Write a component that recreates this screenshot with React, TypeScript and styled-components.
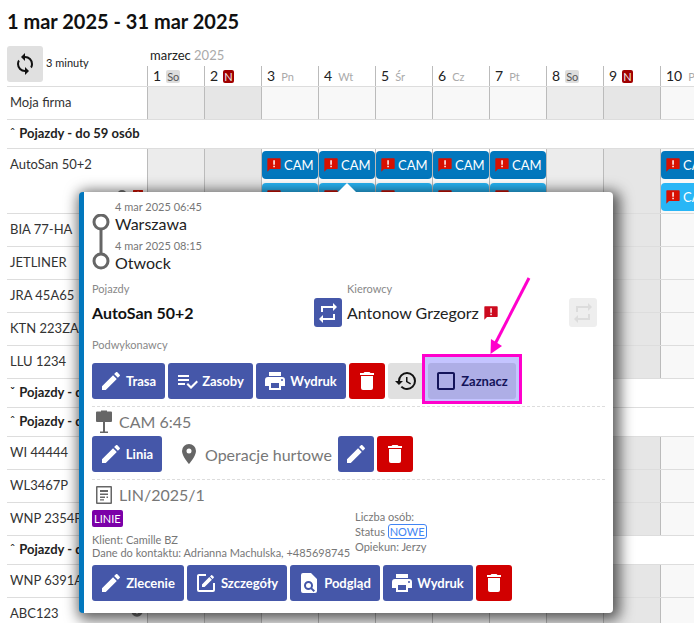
import React from "react";
import styled, { createGlobalStyle } from "styled-components";

const P = {
  pencil: "M20.71,7.04C21.1,6.65 21.1,6 20.71,5.63L18.37,3.29C18,2.9 17.35,2.9 16.96,3.29L15.12,5.12L18.87,8.87M3,17.25V21H6.75L17.81,9.93L14.06,6.18L3,17.25Z",
  trash: "M19,4H15.5L14.5,3H9.5L8.5,4H5V6H19M6,19A2,2 0 0,0 8,21H16A2,2 0 0,0 18,19V7H6V19Z",
  printer: "M18,3H6V7H18M19,12A1,1 0 0,1 18,11A1,1 0 0,1 19,10A1,1 0 0,1 20,11A1,1 0 0,1 19,12M16,19H8V14H16M19,8H5A3,3 0 0,0 2,11V17H6V21H18V17H22V11A3,3 0 0,0 19,8Z",
  sync: "M12,18A6,6 0 0,1 6,12C6,11 6.25,10.03 6.7,9.2L5.24,7.74C4.46,8.97 4,10.43 4,12A8,8 0 0,0 12,20V23L16,19L12,15M12,4V1L8,5L12,9V6A6,6 0 0,1 18,12C18,13 17.75,13.97 17.3,14.8L18.76,16.26C19.54,15.03 20,13.57 20,12A8,8 0 0,0 12,4Z",
  repeat: "M17,17H7V14L3,18L7,22V19H19V13H17M7,7H17V10L21,6L17,2V5H5V11H7V7Z",
  marker: "M12,11.5A2.5,2.5 0 0,1 9.5,9A2.5,2.5 0 0,1 12,6.5A2.5,2.5 0 0,1 14.5,9A2.5,2.5 0 0,1 12,11.5M12,2A7,7 0 0,0 5,9C5,14.25 12,22 12,22C12,22 19,14.25 19,9A7,7 0 0,0 12,2Z",
  history: "M13.5,8H12V13L16.28,15.54L17,14.33L13.5,12.25V8M13,3A9,9 0 0,0 4,12H1L4.96,16.03L9,12H6A7,7 0 0,1 13,5A7,7 0 0,1 20,12A7,7 0 0,1 13,19C11.07,19 9.32,18.21 8.06,16.94L6.64,18.36C8.27,20 10.5,21 13,21A9,9 0 0,0 22,12A9,9 0 0,0 13,3",
  box: "M19,3H5C3.89,3 3,3.89 3,5V19A2,2 0 0,0 5,21H19A2,2 0 0,0 21,19V5C21,3.89 20.1,3 19,3M19,5V19H5V5H19Z",
  list: "M14,10H3V12H14V10M14,6H3V8H14V6M3,16H10V14H3V16M21.5,11.5L23,13L16,20L11.5,15.5L13,14L16,17L21.5,11.5Z",
  bubble: "M3,2H21A1,1 0 0,1 22,3V17A1,1 0 0,1 21,18H6L2,22V3A1,1 0 0,1 3,2Z",
  bang: "M11,5H13.2V11.5H11V5M11,13H13.2V15.4H11V13Z",
  editBox: "M5,3C3.89,3 3,3.89 3,5V19A2,2 0 0,0 5,21H19A2,2 0 0,0 21,19V12H19V19H5V5H12V3H5M17.78,4C17.58,4 17.38,4.07 17.23,4.22L16,5.44L18.56,8L19.78,6.78C20.04,6.52 20.04,6.1 19.78,5.84L18.16,4.22C18.03,4.09 17.86,4 17.78,4M15.32,6.12L8,13.44V16H10.56L17.89,8.66L15.32,6.12Z",
  preview: "M6,2H14L20,8V20A2,2 0 0,1 18,22H6A2,2 0 0,1 4,20V4A2,2 0 0,1 6,2M11.5,10A4.5,4.5 0 0,0 7,14.5A4.5,4.5 0 0,0 11.5,19C12.4,19 13.2,18.74 13.9,18.3L16.6,21L18,19.6L15.3,16.9C15.74,16.2 16,15.4 16,14.5A4.5,4.5 0 0,0 11.5,10M11.5,12A2.5,2.5 0 0,1 14,14.5A2.5,2.5 0 0,1 11.5,17A2.5,2.5 0 0,1 9,14.5A2.5,2.5 0 0,1 11.5,12Z",
  sign: "M9,0.5H15V1.5H19A1,1 0 0,1 20,2.5V11A1,1 0 0,1 19,12H13V21.5H16V23H8V21.5H11V12H5A1,1 0 0,1 4,11V2.5A1,1 0 0,1 5,1.5H9V0.5Z",
  doc: "M5,3H19A1,1 0 0,1 20,4V20A1,1 0 0,1 19,21H5A1,1 0 0,1 4,20V4A1,1 0 0,1 5,3M5.5,4.5V19.5H18.5V4.5H5.5M8,7H16V9H8V7M8,10.5H16V12H8V10.5M8,13.5H13V15H8V13.5M14.5,13.5H16V15H14.5V13.5M8,16.2H12V17.6H8V16.2Z",
  info: "M12,2A10,10 0 1,0 22,12A10,10 0 0,0 12,2M13,17H11V11H13V17M13,9H11V7H13V9Z",
};

const GlobalStyle = createGlobalStyle`
  html, body { margin: 0; padding: 0; background: #fff; }
  body { font-family: "Lato", "Liberation Sans", sans-serif; color: #222; }
`;

const Page = styled.div`
  position: relative;
  width: 694px;
  height: 623px;
  overflow: hidden;
  padding-left: 7px;
  box-sizing: border-box;
`;
const Title = styled.h1`
  margin: 0;
  height: 46px;
  padding-top: 9px;
  box-sizing: border-box;
  font-size: 20px;
  line-height: 24px;
  font-weight: 700;
  color: #111;
  white-space: nowrap;
`;
const Svg = styled.svg<{ $size: number; $color: string }>`
  width: ${(p) => p.$size}px;
  height: ${(p) => p.$size}px;
  flex: none;
  display: block;
  fill: ${(p) => p.$color};
`;
const Icon = ({ d, size = 24, color = "#fff" }: { d: string; size?: number; color?: string }) => (
  <Svg viewBox="0 0 24 24" $size={size} $color={color}><path d={d} /></Svg>
);
const AlertIcon = ({ size = 16, color = "#d81000" }: { size?: number; color?: string }) => (
  <Svg viewBox="0 0 24 24" $size={size} $color={color}>
    <path d={P.bubble} />
    <path d={P.bang} fill="#fff" />
  </Svg>
);

const Grid = styled.div`
  display: grid;
  grid-template-columns: 140px repeat(10, 57px);
  width: 710px;
`;
const HeaderGrid = styled(Grid)`
  height: 40px;
  border-bottom: 1px solid #ddd;
`;
const HeaderLeft = styled.div`
  display: flex;
  align-items: flex-start;
  gap: 3px;
`;
const RefreshButton = styled.button`
  width: 36px;
  height: 36px;
  padding: 0;
  border: 0;
  border-radius: 3px;
  background: #e0e0e0;
  display: flex;
  align-items: center;
  justify-content: center;
`;
const RefreshLabel = styled.span`
  font-size: 11px;
  line-height: 16px;
  margin-top: 9px;
  color: #222;
`;
const HeaderRight = styled.div`
  grid-column: 2 / -1;
  display: flex;
  flex-direction: column;
`;
const Month = styled.div`
  height: 20px;
  padding: 0 0 0 3px;
  box-sizing: border-box;
  font-size: 13px;
  line-height: 18px;
  color: #222;
  span { color: #aaa; }
`;
const Days = styled.div`
  display: grid;
  grid-template-columns: repeat(10, 57px);
  height: 20px;
`;
const DayHead = styled.div`
  border-left: 1px solid #bbb;
  display: flex;
  align-items: center;
  padding-left: 5px;
  gap: 5px;
  font-size: 14px;
  line-height: 20px;
  color: #222;
`;
const DayName = styled.span<{ $kind: string }>`
  font-size: 11px;
  line-height: 13px;
  padding: 0 1px;
  border-radius: 2px;
  color: ${(p) => (p.$kind === "N" ? "#eee" : p.$kind === "So" ? "#555" : "#aaa")};
  background: ${(p) => (p.$kind === "N" ? "#a00000" : p.$kind === "So" ? "#ddd" : "transparent")};
`;
const Row = styled(Grid)<{ $h: number }>`
  height: ${(p) => p.$h}px;
  box-sizing: border-box;
  border-bottom: 1px solid #ddd;
`;
const RowName = styled.div`
  position: relative;
  padding: 7px 0 0 3px;
  font-size: 13px;
  line-height: 17px;
  color: #333;
  white-space: nowrap;
`;
const RowIcons = styled.div`
  position: absolute;
  right: 3px;
  bottom: 12px;
  display: flex;
  gap: 4px;
`;
const GroupName = styled.div`
  grid-column: 1 / -1;
  padding: 5px 0 0 3px;
  font-size: 13px;
  line-height: 16px;
  font-weight: 700;
  color: #222;
  white-space: nowrap;
`;
const Caret = styled.span`
  font-weight: 400;
  margin-right: 4px;
`;
const DayCell = styled.div<{ $bg: string }>`
  border-left: 1px solid #bbb;
  background: ${(p) => p.$bg};
  padding: 2px 0 0 0;
  display: flex;
  flex-direction: column;
  gap: 4px;
`;
const Chip = styled.div<{ $light?: boolean }>`
  width: 56px;
  height: 28px;
  box-sizing: border-box;
  border-radius: 4px;
  background: ${(p) => (p.$light ? "#29b6f6" : "#0277bd")};
  color: #fff;
  display: flex;
  align-items: center;
  gap: 2px;
  padding-left: 4px;
  font-size: 13px;
`;

const Popover = styled.div`
  position: absolute;
  left: 79px;
  top: 192px;
  width: 534px;
  height: 421px;
  box-sizing: border-box;
  background: #fff;
  border-left: 5px solid #0277bd;
  border-radius: 4px;
  box-shadow: 3px 3px 14px 4px rgba(0, 0, 0, 0.62);
  padding: 8px 8px 0 8px;
  display: flex;
  flex-direction: column;
`;
const PopArrow = styled.div`
  position: absolute;
  left: 254px;
  top: -9px;
  width: 0;
  height: 0;
  border-left: 9px solid transparent;
  border-right: 9px solid transparent;
  border-bottom: 9px solid #fff;
`;
const Route = styled.div`
  display: flex;
  gap: 5px;
  height: 82px;
`;
const Stops = styled.div`
  display: flex;
  flex-direction: column;
  gap: 6px;
`;
const Stop = styled.div`
  display: flex;
  flex-direction: column;
`;
const StopTime = styled.div`
  font-size: 11px;
  line-height: 14px;
  color: #777;
`;
const StopPlace = styled.div`
  font-size: 16px;
  line-height: 19px;
  color: #222;
`;
const TimelineSvg = styled.svg`
  width: 18px;
  height: 62px;
  margin-top: 14px;
  flex: none;
`;
const AssignGrid = styled.div`
  display: grid;
  grid-template-columns: 255px 250px;
`;
const Label = styled.div`
  font-size: 11px;
  line-height: 14px;
  color: #888;
  margin-bottom: 2px;
`;
const AssignRow = styled.div`
  display: flex;
  align-items: center;
  height: 29px;
  width: 250px;
  justify-content: space-between;
  font-size: 16px;
`;
const BoldValue = styled.span`
  font-weight: 700;
  color: #111;
`;
const Driver = styled.span`
  display: flex;
  align-items: center;
  gap: 4px;
  color: #222;
`;
const SquareButton = styled.div<{ $muted?: boolean }>`
  width: 28px;
  height: 29px;
  border-radius: 3px;
  background: ${(p) => (p.$muted ? "#eee" : "#4557a9")};
  display: flex;
  align-items: center;
  justify-content: center;
`;
const SubLabel = styled(Label)`
  margin: 11px 0 11px;
`;
const Actions = styled.div`
  display: flex;
  align-items: flex-start;
  gap: 3px;
  height: 36px;
`;
const ActionButton = styled.div<{ $w?: number; $kind?: string; $text?: boolean }>`
  width: ${(p) => (p.$w ? `${p.$w}px` : "auto")};
  height: 36px;
  box-sizing: border-box;
  border-radius: 3px;
  display: flex;
  align-items: center;
  justify-content: center;
  gap: 3px;
  padding-right: ${(p) => (p.$text ? 2 : 0)}px;
  font-size: 13px;
  font-weight: 700;
  color: #fff;
  white-space: nowrap;
  background: ${(p) =>
    p.$kind === "danger" ? "#d10000" : p.$kind === "plain" ? "#e0e0e0" : p.$kind === "picked" ? "#aeaee6" : "#4557a9"};
  ${(p) => p.$kind === "picked" && "color: #14145a;"}
`;
const Highlight = styled.div`
  width: 100px;
  height: 50px;
  box-sizing: border-box;
  margin: -9px 0 -5px -5px;
  padding: 6px 3px 2px 3px;
  border: 3px solid #ff00cc;
  background: #c4c4ff;
`;
const Divider = styled.div`
  border-top: 1px dashed #ddd;
  margin-top: 7px;
`;
const SectionHead = styled.div`
  display: flex;
  align-items: center;
  gap: 3px;
  height: 29px;
  font-size: 16px;
  color: #777;
`;
const PlaceText = styled.span`
  display: flex;
  align-items: center;
  gap: 4px;
  font-size: 16px;
  color: #777;
  height: 36px;
  margin: 0 3px 0 12px;
`;
const InfoGrid = styled.div`
  display: grid;
  grid-template-columns: 263px auto;
  height: 56px;
  font-size: 11px;
  color: #777;
`;
const InfoLeft = styled.div`
  line-height: 13px;
  white-space: nowrap;
`;
const Badge = styled.div`
  width: fit-content;
  height: 17px;
  line-height: 17px;
  padding: 0 2px;
  margin: 1px 0 6px;
  border-radius: 2px;
  background: #7b00a8;
  color: #fff;
`;
const InfoRight = styled.div`
  line-height: 15px;
`;
const StatusBadge = styled.span`
  display: inline-block;
  line-height: 13px;
  padding: 0 1px;
  border: 1px solid #4285f4;
  border-radius: 3px;
  color: #4285f4;
`;
const PointerSvg = styled.svg`
  position: absolute;
  left: 480px;
  top: 270px;
  width: 60px;
  height: 90px;
`;

const dayDefs: [number, string][] = [
  [1, "So"], [2, "N"], [3, "Pn"], [4, "Wt"], [5, "Śr"], [6, "Cz"], [7, "Pt"], [8, "So"], [9, "N"], [10, "Pn"],
];
const bgFor = (k: string) => (k === "So" ? "#ececec" : k === "N" ? "#e6e6e6" : "#f8f8f8");

type RowDef = { name: string; group?: boolean; open?: boolean; info?: boolean };
const rows: RowDef[] = [
  { name: "Moja firma" },
  { name: "Pojazdy - do 59 osób", group: true, open: true },
  { name: "AutoSan 50+2" },
  { name: "BIA 77-HA" },
  { name: "JETLINER" },
  { name: "JRA 45A65" },
  { name: "KTN 223ZA" },
  { name: "LLU 1234" },
  { name: "Pojazdy - do 9 osób", group: true },
  { name: "Pojazdy - do 20 osób", group: true, open: true },
  { name: "WI 44444" },
  { name: "WL3467P" },
  { name: "WNP 2354P" },
  { name: "Pojazdy - dostawcze", group: true, open: true },
  { name: "WNP 6391A" },
  { name: "ABC123", info: true },
];

const CamChip = ({ light }: { light?: boolean }) => (
  <Chip $light={light}>
    <AlertIcon />
    CAM
  </Chip>
);

const VehicleRow = ({ r }: { r: RowDef }) => {
  if (r.group) {
    return (
      <Row $h={29}>
        <GroupName>
          <Caret>{r.open ? "ˆ" : "ˬ"}</Caret>
          {r.name}
        </GroupName>
      </Row>
    );
  }
  const auto = r.name === "AutoSan 50+2";
  return (
    <Row $h={auto ? 65 : 33}>
      <RowName>
        {r.name}
        {auto && (
          <RowIcons>
            <Icon d={P.info} size={12} color="#777" />
            <AlertIcon size={12} />
          </RowIcons>
        )}
        {r.info && (
          <RowIcons>
            <Icon d={P.info} size={14} color="#777" />
          </RowIcons>
        )}
      </RowName>
      {dayDefs.map(([n, k]) => (
        <DayCell key={n} $bg={auto && n >= 3 && n <= 7 ? "#fff" : bgFor(k)}>
          {auto && ((n >= 3 && n <= 7) || n === 10) && (
            <>
              <CamChip />
              <CamChip light />
            </>
          )}
        </DayCell>
      ))}
    </Row>
  );
};

export default function App() {
  return (
    <Page>
      <GlobalStyle />
      <Title>1 mar 2025 - 31 mar 2025</Title>
      <HeaderGrid>
        <HeaderLeft>
          <RefreshButton>
            <Icon d={P.sync} size={24} color="#111" />
          </RefreshButton>
          <RefreshLabel>3 minuty</RefreshLabel>
        </HeaderLeft>
        <HeaderRight>
          <Month>
            marzec <span>2025</span>
          </Month>
          <Days>
            {dayDefs.map(([n, k]) => (
              <DayHead key={n}>
                {n}
                <DayName $kind={k}>{k}</DayName>
              </DayHead>
            ))}
          </Days>
        </HeaderRight>
      </HeaderGrid>
      {rows.map((r) => (
        <VehicleRow key={r.name} r={r} />
      ))}

      <Popover>
        <PopArrow />
        <Route>
          <TimelineSvg viewBox="0 0 18 62">
            <line x1="9" y1="15" x2="9" y2="47" stroke="#666" strokeWidth="3" />
            <circle cx="9" cy="8" r="7" fill="#fff" stroke="#666" strokeWidth="3" />
            <circle cx="9" cy="47" r="7" fill="#fff" stroke="#666" strokeWidth="3" />
          </TimelineSvg>
          <Stops>
            <Stop>
              <StopTime>4 mar 2025 06:45</StopTime>
              <StopPlace>Warszawa</StopPlace>
            </Stop>
            <Stop>
              <StopTime>4 mar 2025 08:15</StopTime>
              <StopPlace>Otwock</StopPlace>
            </Stop>
          </Stops>
        </Route>
        <AssignGrid>
          <div>
            <Label>Pojazdy</Label>
            <AssignRow>
              <BoldValue>AutoSan 50+2</BoldValue>
              <SquareButton>
                <Icon d={P.repeat} size={24} />
              </SquareButton>
            </AssignRow>
          </div>
          <div>
            <Label>Kierowcy</Label>
            <AssignRow>
              <Driver>
                Antonow Grzegorz
                <AlertIcon size={16} color="#cc0a1e" />
              </Driver>
              <SquareButton $muted>
                <Icon d={P.repeat} size={24} color="#dcdcdc" />
              </SquareButton>
            </AssignRow>
          </div>
        </AssignGrid>
        <SubLabel>Podwykonawcy</SubLabel>
        <Actions>
          <ActionButton $w={73} $text><Icon d={P.pencil} />Trasa</ActionButton>
          <ActionButton $w={85} $text><Icon d={P.list} />Zasoby</ActionButton>
          <ActionButton $w={90} $text><Icon d={P.printer} />Wydruk</ActionButton>
          <ActionButton $w={36} $kind="danger"><Icon d={P.trash} /></ActionButton>
          <ActionButton $w={36} $kind="plain"><Icon d={P.history} color="#111" /></ActionButton>
          <Highlight>
            <ActionButton $kind="picked" $text><Icon d={P.box} color="#14145a" />Zaznacz</ActionButton>
          </Highlight>
        </Actions>
        <Divider />
        <SectionHead>
          <Icon d={P.sign} size={24} color="#666" />
          CAM 6:45
        </SectionHead>
        <Actions>
          <ActionButton $w={70} $text><Icon d={P.pencil} />Linia</ActionButton>
          <PlaceText>
            <Icon d={P.marker} size={24} color="#666" />
            Operacje hurtowe
          </PlaceText>
          <ActionButton $w={36}><Icon d={P.pencil} /></ActionButton>
          <ActionButton $w={36} $kind="danger"><Icon d={P.trash} /></ActionButton>
        </Actions>
        <Divider />
        <SectionHead>
          <Icon d={P.doc} size={24} color="#666" />
          LIN/2025/1
        </SectionHead>
        <InfoGrid>
          <InfoLeft>
            <Badge>LINIE</Badge>
            <div>Klient: Camille BZ</div>
            <div>Dane do kontaktu: Adrianna Machulska, +485698745</div>
          </InfoLeft>
          <InfoRight>
            <div>Liczba osób:</div>
            <div>Status <StatusBadge>NOWE</StatusBadge></div>
            <div>Opiekun: Jerzy</div>
          </InfoRight>
        </InfoGrid>
        <Actions>
          <ActionButton $w={92} $text><Icon d={P.pencil} />Zlecenie</ActionButton>
          <ActionButton $w={100} $text><Icon d={P.editBox} />Szczegóły</ActionButton>
          <ActionButton $w={90} $text><Icon d={P.preview} />Podgląd</ActionButton>
          <ActionButton $w={90} $text><Icon d={P.printer} />Wydruk</ActionButton>
          <ActionButton $w={36} $kind="danger"><Icon d={P.trash} /></ActionButton>
        </Actions>
      </Popover>

      <PointerSvg viewBox="0 0 60 90">
        <line x1="49" y1="8" x2="14" y2="76" stroke="#ff00cc" strokeWidth="3" />
        <polygon points="10.5,84 11,69 22,76" fill="#ff00cc" />
      </PointerSvg>
    </Page>
  );
}
